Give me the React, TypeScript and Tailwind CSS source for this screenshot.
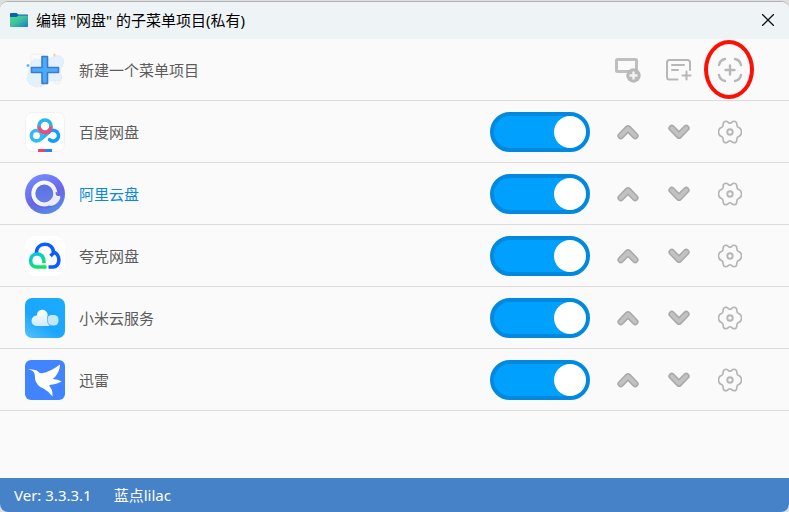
import { useState, type ReactNode } from 'react';
import { clsx } from 'clsx';

interface MenuItem {
  id: string;
  name: string;
  icon: ReactNode;
  active?: boolean;
}

function FolderIcon() {
  return (
    <svg viewBox="0 0 18 14" className="h-3.5 w-[18px]" aria-hidden="true">
      <defs>
        <linearGradient id="folder" x1="0" y1="0" x2="1" y2="1">
          <stop offset="0" stopColor="#55dc82" />
          <stop offset="0.5" stopColor="#3cbf9f" />
          <stop offset="1" stopColor="#1478d4" />
        </linearGradient>
      </defs>
      <path d="M0 .8Q0 0 .8 0H6.5L8.5 1.5H17.2Q18 1.5 18 2.3V8H0Z" fill="#0b62bd" />
      <path d="M0 4H6.5L8.5 2.5H17.2Q18 2.5 18 3.3V13.2Q18 14 17.2 14H.8Q0 14 0 13.2Z" fill="url(#folder)" />
    </svg>
  );
}

function NewItemIcon() {
  return (
    <svg viewBox="0 0 40 40" className="size-10" aria-hidden="true">
      <path
        d="M6 13Q8 8 15 10Q21 12 26 8Q34 3 38 9Q40 13 36 18Q34 23 37 27Q37 32 29 31Q23 30 19 35Q12 39 5 34Q1 30 3 25Q5 19 6 13Z"
        fill="#e3f1fd"
        stroke="#d5e8f8"
        strokeDasharray="2 1"
      />
      <path d="M6 11Q4 4 11 4Q19 4 24 8" fill="none" stroke="#f5efe2" />
      <path d="M29 33Q36 36 36 29L34 23" fill="none" stroke="#f5edd8" />
      <path d="M29.500 3.500v3M28 5h3" stroke="#f8cf83" />
      <path d="M3 14v3M1.500 15.500h3" stroke="#59b9f5" strokeWidth="1.400" />
      <path
        d="M17 6.500h5.500v11h11v5h-11v11H17v-11H6.500v-5H17Z"
        fill="#48adf6"
        stroke="#3f78cf"
        strokeWidth="1.600"
        strokeLinejoin="round"
      />
    </svg>
  );
}

function BaiduIcon() {
  return (
    <svg viewBox="0 0 40 40" className="size-10" aria-hidden="true">
      <rect x="0.500" y="0.500" width="39" height="39" rx="7" fill="#fff" stroke="#f2f2f2" />
      <g fill="none" strokeWidth="3.600">
        <circle cx="20" cy="14" r="6" stroke="#27b5ee" />
        <path d="M15.500 27.500L24 19.800" stroke="#22b0f5" />
        <circle cx="11.500" cy="23.700" r="5.200" stroke="#32baf2" />
        <path d="M24 20.200A5.400 5.400 0 1 1 24.500 27.700" stroke="#139fff" strokeLinecap="round" />
        <path d="M14 14.500A6 6 0 0 0 26 14.500" stroke="#fc4770" />
      </g>
      <path d="M13 37h7v3h-7Z" fill="#f94167" />
      <path d="M20 37h7v3h-7Z" fill="#2385f8" />
    </svg>
  );
}

function AliyunIcon() {
  return (
    <svg viewBox="0 0 40 40" className="size-10" aria-hidden="true">
      <defs>
        <linearGradient id="aliyun" x1="0.200" y1="0" x2="0.700" y2="1">
          <stop offset="0" stopColor="#758dfd" />
          <stop offset="0.600" stopColor="#6965e8" />
          <stop offset="1" stopColor="#5590e4" />
        </linearGradient>
        <linearGradient id="aliyunCore" x1="0" y1="0" x2="0" y2="1">
          <stop offset="0" stopColor="#5b6ee0" />
          <stop offset="1" stopColor="#6681ea" />
        </linearGradient>
        <linearGradient id="aliyunRing" x1="0" y1="0" x2="1" y2="1">
          <stop offset="0" stopColor="#ffffff" />
          <stop offset="1" stopColor="#e8e8fd" />
        </linearGradient>
      </defs>
      <circle cx="20" cy="20" r="20" fill="url(#aliyun)" />
      <circle cx="19.500" cy="19.500" r="11" fill="url(#aliyunCore)" />
      <circle cx="19.500" cy="20.500" r="12" fill="none" stroke="#575bcc" strokeOpacity="0.350" strokeWidth="4" />
      <circle cx="19.300" cy="19.500" r="11" fill="none" stroke="url(#aliyunRing)" strokeWidth="4" />
      <path
        d="M28.500 20.500Q29.500 23 34.500 21.500Q36 22.500 35 25Q32 31 25.500 32Q22 30 24.500 28Q28 25.500 28.500 20.500Z"
        fill="#ececfe"
      />
      <path d="M31.300 18Q30.800 22 34.500 21" fill="none" stroke="#6664dc" strokeWidth="1.200" />
    </svg>
  );
}

function QuarkIcon() {
  return (
    <svg viewBox="0 0 40 40" className="size-10" aria-hidden="true">
      <defs>
        <linearGradient id="quark" x1="0" y1="0" x2="0.600" y2="1">
          <stop offset="0" stopColor="#0fc0ef" />
          <stop offset="1" stopColor="#05e95c" />
        </linearGradient>
      </defs>
      <rect width="40" height="40" rx="11" fill="#fff" />
      <g fill="none" strokeWidth="3.600">
        <path
          d="M11.500 17.500C11 5.500 28 5.500 28.500 16C36 18.500 35.500 31 28 31H23.500"
          stroke="#0c5dff"
          strokeLinejoin="round"
        />
        <path d="M25.500 20L28.500 17" stroke="#0c5dff" />
        <path d="M21.500 31H12C3.500 31 3.500 18 12 18C17 18 19 21 19 27" stroke="url(#quark)" />
      </g>
    </svg>
  );
}

function XiaomiIcon() {
  return (
    <svg viewBox="0 0 40 40" className="size-10" aria-hidden="true">
      <defs>
        <linearGradient id="mi" x1="0" y1="1" x2="0.700" y2="0">
          <stop offset="0" stopColor="#55c2fc" />
          <stop offset="0.450" stopColor="#1ba6fd" />
          <stop offset="1" stopColor="#19abff" />
        </linearGradient>
        <linearGradient id="miCloud" x1="0" y1="0" x2="0" y2="1">
          <stop offset="0" stopColor="#ffffff" />
          <stop offset="1" stopColor="#cfebfc" />
        </linearGradient>
      </defs>
      <rect width="40" height="40" rx="7" fill="url(#mi)" />
      <rect x="22" y="17" width="11.500" height="10.500" rx="4.500" fill="#c4e7fc" />
      <path
        d="M11.500 28A5 5 0 0 1 12 17.500A5.300 5.300 0 1 1 22.600 16.500V24Q22.600 26.500 24.500 28Z"
        fill="url(#miCloud)"
      />
      <path d="M22.500 18V23Q23 27.500 27.500 27.500" fill="none" stroke="#58b6ef" strokeWidth="0.800" />
    </svg>
  );
}

function XunleiIcon() {
  return (
    <svg viewBox="0 0 40 40" className="size-10" aria-hidden="true">
      <rect width="40" height="40" rx="6" fill="#4184ff" />
      <path
        d="M3 9.500Q6 8.700 8.500 9.800Q12 10 13 11.500Q14 13.500 17 13.200Q25 12 35 4.500Q35 11 30 17L27.500 19Q33 19 36.700 21.500Q32 24 26 24.800L24 25.500Q28 30 27.500 36.500Q23 31 18.500 28.500Q11.500 26 10 19Q10.200 13 8 11.200Q6 9.800 3 9.500Z"
        fill="#fff"
      />
    </svg>
  );
}

function AddGroupIcon() {
  return (
    <svg viewBox="0 0 28 28" className="size-7" fill="none" aria-hidden="true">
      <rect x="2.500" y="3.500" width="20" height="12" rx="1" stroke="#bfbfbf" strokeWidth="3" />
      <circle cx="19.500" cy="19.500" r="7.200" fill="#b9b9b9" />
      <path d="M19.500 15.500v8M15.500 19.500h8" stroke="#f2f2f2" strokeWidth="2.400" />
    </svg>
  );
}

function AddNoteIcon() {
  return (
    <svg
      viewBox="0 0 28 28"
      className="size-7"
      fill="none"
      stroke="#b7b7b7"
      strokeWidth="2"
      strokeLinecap="round"
      aria-hidden="true"
    >
      <path d="M12.500 23.500H4.500Q2 23.500 2 21V6.500Q2 4 4.500 4H22.500Q25 4 25 6.500V14" />
      <path d="M7 9h12M7 14h6M21.500 15.500v8M17.500 19.500h8" />
    </svg>
  );
}

function ScanAddIcon() {
  return (
    <svg
      viewBox="0 0 28 28"
      className="size-7"
      fill="none"
      stroke="#b8b8b8"
      strokeWidth="2.400"
      strokeLinecap="round"
      aria-hidden="true"
    >
      <path d="M3 9Q4 4 9 3M19 3Q24 4 25 9M25 19Q24 24 19 25M9 25Q4 24 3 19" />
      <path d="M14 9.500v9M9.500 14h9" />
    </svg>
  );
}

function ArrowIcon({ down = false }: { down?: boolean }) {
  const d = down ? 'M4.800 8.200L12 15.500L19.200 8.200' : 'M4.800 15.800L12 8.500L19.200 15.800';
  return (
    <svg viewBox="0 0 24 24" className="size-6" fill="none" strokeLinecap="round" strokeLinejoin="round" aria-hidden="true">
      <path d={d} stroke="#a9a9a9" strokeWidth="6.800" />
      <path d={d} stroke="#c2c2c2" strokeWidth="3.800" />
    </svg>
  );
}

function GearIcon() {
  return (
    <svg viewBox="0 0 24 24" className="size-6" fill="none" stroke="#b5b5b5" aria-hidden="true">
      <path
        d="M12 3.300c1.600 0 2-2 3.800-2c1.800 0 3 1.200 3 2.800c0 2 .3 3 1.800 3.500c2 .6 2.900 2 2.900 4.400c0 2.400-.9 3.800-2.900 4.400c-1.500.5-1.800 1.500-1.800 3.500c0 1.600-1.200 2.800-3 2.800c-1.800 0-2.200-2-3.800-2c-1.600 0-2 2-3.800 2c-1.800 0-3-1.200-3-2.800c0-2-.3-3-1.800-3.500c-2-.6-2.900-2-2.900-4.400c0-2.400.9-3.800 2.900-4.400c1.500-.5 1.800-1.500 1.800-3.500c0-1.600 1.200-2.800 3-2.800c1.800 0 2.200 2 3.800 2z"
        strokeWidth="1.600"
      />
      <circle cx="12" cy="12" r="2.700" strokeWidth="1.900" />
    </svg>
  );
}

function IconButton({ label, children }: { label: string; children: ReactNode }) {
  return (
    <button type="button" aria-label={label} className="flex size-10 items-center justify-center">
      {children}
    </button>
  );
}

const items: MenuItem[] = [
  { id: 'baidu', name: '百度网盘', icon: <BaiduIcon /> },
  { id: 'aliyun', name: '阿里云盘', icon: <AliyunIcon />, active: true },
  { id: 'quark', name: '夸克网盘', icon: <QuarkIcon /> },
  { id: 'xiaomi', name: '小米云服务', icon: <XiaomiIcon /> },
  { id: 'xunlei', name: '迅雷', icon: <XunleiIcon /> },
];

function MenuRow({ item }: { item: MenuItem }) {
  const [enabled, setEnabled] = useState(true);

  return (
    <li className="flex items-center border-b border-[#dcdcdc] pt-[11px] pr-[39px] pb-2.5 pl-[25px]">
      {item.icon}
      <label
        htmlFor={item.id}
        className={clsx('ml-3.5 flex-1', item.active ? 'text-[#0a8ade]' : 'text-[#5c5c5c]')}
      >
        {item.name}
      </label>
      <input
        id={item.id}
        type="checkbox"
        role="switch"
        checked={enabled}
        onChange={(e) => setEnabled(e.target.checked)}
        className="mr-[18px] flex h-10 w-[100px] appearance-none items-center rounded-full border-4 border-[#a5a5a5] bg-[#c8c8c8] before:size-8 before:rounded-full before:bg-white checked:justify-end checked:border-[#0089de] checked:bg-[#00a0ff]"
      />
      <div className="flex gap-[11px]">
        <IconButton label="上移">
          <ArrowIcon />
        </IconButton>
        <IconButton label="下移">
          <ArrowIcon down />
        </IconButton>
        <IconButton label="设置">
          <GearIcon />
        </IconButton>
      </div>
    </li>
  );
}

export default function App() {
  return (
    <div className="flex min-h-screen flex-col bg-[#dedede] pt-px font-['Noto_Sans','Noto_Sans_CJK_SC',sans-serif] text-[15px] leading-5">
      <div className="flex flex-1 flex-col overflow-hidden rounded-lg border-t border-[#b0b3b3] bg-[#fafafa]">
        <header className="flex items-center bg-[#eef4f5] pt-2 pr-[11px] pb-[9px] pl-2.5">
          <FolderIcon />
          <h1 className="ml-2 flex-1 text-black">编辑 "网盘" 的子菜单项目(私有)</h1>
          <button type="button" aria-label="关闭" className="flex size-5 items-center justify-center">
            <svg viewBox="0 0 12 12" className="size-3" stroke="#111" strokeWidth="1.300" aria-hidden="true">
              <path d="M0 0L12 12M12 0L0 12" />
            </svg>
          </button>
        </header>

        <main className="flex-1">
          <ul>
            <li className="flex items-center border-b border-[#dcdcdc] pt-[11px] pr-[39px] pb-2.5 pl-[25px]">
              <NewItemIcon />
              <span className="ml-3.5 flex-1 text-[#5c5c5c]">新建一个菜单项目</span>
              <div className="flex gap-[11px]">
                <IconButton label="新建分组">
                  <AddGroupIcon />
                </IconButton>
                <IconButton label="新建项目">
                  <AddNoteIcon />
                </IconButton>
                <div className="relative">
                  <IconButton label="添加预设">
                    <ScanAddIcon />
                  </IconButton>
                  <div className="pointer-events-none absolute -top-2.5 -right-1 -bottom-[9px] -left-1.5 rounded-[50%] border-4 border-[#fb1006]" />
                </div>
              </div>
            </li>
            {items.map((item) => (
              <MenuRow key={item.id} item={item} />
            ))}
          </ul>
        </main>

        <footer className="flex gap-[22px] bg-[#4682c8] px-3.5 py-[7px] text-white">
          <span>Ver: 3.3.3.1</span>
          <span>蓝点lilac</span>
        </footer>
      </div>
    </div>
  );
}
